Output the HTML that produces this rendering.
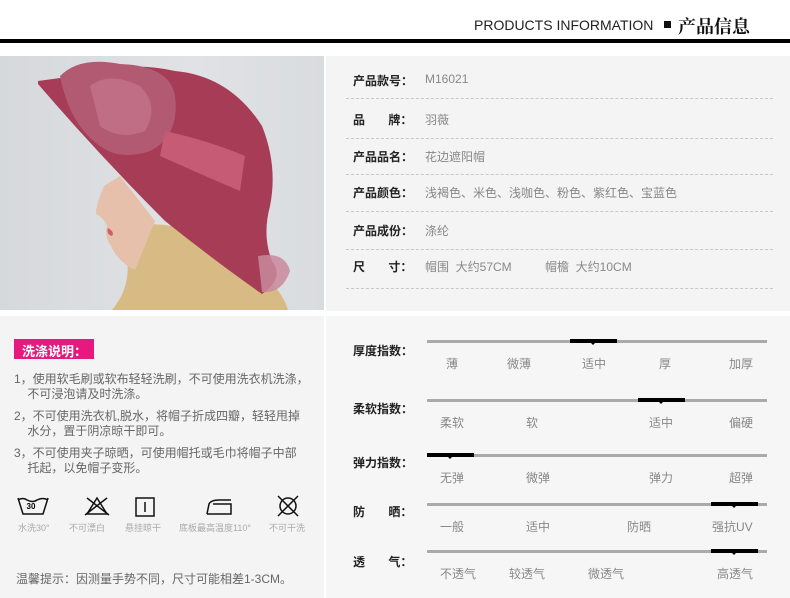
<!DOCTYPE html>
<html><head><meta charset="utf-8"><style>
*{margin:0;padding:0;box-sizing:border-box}
body{width:790px;height:598px;background:#fff;position:relative;overflow:hidden;font-family:"Liberation Sans","Noto Sans CJK SC",sans-serif}
.a{position:absolute}
.lbl{font-size:12px;color:#222;font-weight:bold}
.val{font-size:12px;color:#888}
.dash{position:absolute;left:346px;width:427px;border-top:1px dashed #c8c8c8}
.bar{position:absolute;left:427px;width:340px;height:3px;background:#aaa}
.blk{position:absolute;height:4px;background:#000;top:-1px;width:47px}
.blk:after{content:"";position:absolute;left:20px;top:3px;border:3px solid transparent;border-top:3px solid #000}
.t{position:absolute;font-size:12px;color:#888;white-space:nowrap}
.ic{position:absolute;top:492px;font-size:9px;color:#aaa;white-space:nowrap}
</style></head><body>
<div class="a" style="left:474px;top:17px;font-size:14px;color:#222">PRODUCTS INFORMATION</div>
<div class="a" style="left:664px;top:21px;width:7px;height:7px;background:#111"></div>
<div class="a" style="left:678px;top:13px;font-size:18px;color:#111;font-family:'Noto Serif CJK SC',serif;font-weight:bold">产品信息</div>
<div class="a" style="left:0;top:39px;width:790px;height:4px;background:#000"></div>

<div class="a" style="left:0;top:56px;width:324px;height:254px;background:linear-gradient(90deg,#d6d9dc,#e0e2e4 60%,#d9dcdf);overflow:hidden">
<svg width="324" height="254" viewBox="0 0 324 254">
<path d="M118 175 Q170 155 230 195 Q280 225 288 254 L112 254 Q140 220 118 175 Z" fill="#d8bb84"/>
<path d="M104 130 Q96 148 96 158 Q104 162 107 170 Q104 180 111 190 Q118 206 135 214 L155 165 L120 120 Z" fill="#e6c0aa"/>
<path d="M108 172 Q115 176 112 180 Q106 178 108 172 Z" fill="#c9606a"/>
<path d="M38 25 L90 18 Q130 5 175 15 Q230 20 262 70 Q278 110 270 150 Q262 180 272 205 Q285 222 262 238 Q215 205 165 165 Q100 100 38 28 Z" fill="#a63c56"/>
<path d="M60 20 Q80 0 120 8 Q170 10 175 40 Q180 80 150 95 Q120 105 100 90 Q70 70 60 20 Z" fill="#b35a73"/>
<path d="M90 30 Q110 15 140 30 Q160 50 145 75 Q120 85 100 70 Z" fill="#c27389" opacity=".8"/>
<path d="M165 75 Q210 85 245 100 L240 135 Q200 118 160 100 Z" fill="#c55b75"/>
<path d="M258 200 Q285 195 290 215 Q282 238 262 236 Z" fill="#c98a9c" opacity=".85"/>
</svg></div>

<div class="a" style="left:326px;top:56px;width:464px;height:255px;background:#f4f4f4"></div>
<div class="a lbl" style="left:353px;top:72px">产品款号：</div><div class="a val" style="left:425px;top:72px">M16021</div>
<div class="dash" style="top:98px"></div>
<div class="a lbl" style="left:353px;top:111px">品&nbsp;&nbsp;&nbsp;&nbsp;&nbsp;&nbsp;&nbsp;牌：</div><div class="a val" style="left:425px;top:111px">羽薇</div>
<div class="dash" style="top:138px"></div>
<div class="a lbl" style="left:353px;top:148px">产品品名：</div><div class="a val" style="left:425px;top:148px">花边遮阳帽</div>
<div class="dash" style="top:174px"></div>
<div class="a lbl" style="left:353px;top:184px">产品颜色：</div><div class="a val" style="left:425px;top:184px">浅褐色、米色、浅咖色、粉色、紫红色、宝蓝色</div>
<div class="dash" style="top:211px"></div>
<div class="a lbl" style="left:353px;top:222px">产品成份：</div><div class="a val" style="left:425px;top:222px">涤纶</div>
<div class="dash" style="top:249px"></div>
<div class="a lbl" style="left:353px;top:258px">尺&nbsp;&nbsp;&nbsp;&nbsp;&nbsp;&nbsp;&nbsp;寸：</div><div class="a val" style="left:425px;top:258px;word-spacing:0">帽围&nbsp;&nbsp;大约57CM&nbsp;&nbsp;&nbsp;&nbsp;&nbsp;&nbsp;&nbsp;&nbsp;&nbsp;&nbsp;帽檐&nbsp;&nbsp;大约10CM</div>
<div class="dash" style="top:288px"></div>

<div class="a" style="left:0;top:316px;width:324px;height:282px;background:#f4f4f4"></div>
<div class="a" style="left:326px;top:316px;width:464px;height:282px;background:#f6f6f6"></div>
<div class="a" style="left:14px;top:339px;width:80px;height:20px;background:#e5197e;color:#fff;font-size:13px;font-weight:bold;padding:2px 0 0 8px">洗涤说明：</div>
<div class="a" style="left:14px;top:372px;font-size:12px;color:#666;line-height:15px;width:300px">1，使用软毛刷或软布轻轻洗刷，不可使用洗衣机洗涤，<br>&nbsp;&nbsp;&nbsp;&nbsp;不可浸泡请及时洗涤。</div>
<div class="a" style="left:14px;top:409px;font-size:12px;color:#666;line-height:15px;width:300px">2，不可使用洗衣机,脱水，将帽子折成四瓣，轻轻甩掉<br>&nbsp;&nbsp;&nbsp;&nbsp;水分，置于阴凉晾干即可。</div>
<div class="a" style="left:14px;top:446px;font-size:12px;color:#666;line-height:15px;width:300px">3，不可使用夹子晾晒，可使用帽托或毛巾将帽子中部<br>&nbsp;&nbsp;&nbsp;&nbsp;托起，以免帽子变形。</div>
<svg class="a" style="left:15px;top:494px" width="300" height="30">
<g fill="none" stroke="#111" stroke-width="1.5">
<path d="M3 4 L8 20 L28 20 L33 4"/><path d="M3 6 Q8 3 12 6 Q18 9 22 6 Q28 3 33 6"/>
<path d="M72 20 L82 4 L92 20 Z"/><path d="M72 4 L94 21 M92 4 L70 21"/>
<rect x="121" y="4" width="18" height="18"/><path d="M130 8 V18"/>
<path d="M192 20 L194 10 Q196 6 204 6 L216 6 M192 20 H216 V10 H198"/>
<circle cx="273" cy="12" r="8"/><path d="M263 2 L283 22 M283 2 L263 22"/>
</g><text x="16" y="15" font-size="8" text-anchor="middle" font-family="Liberation Sans" font-weight="bold">30</text>
</svg>
<div class="ic" style="left:18px;top:521px">水洗30°</div>
<div class="ic" style="left:69px;top:521px">不可漂白</div>
<div class="ic" style="left:125px;top:521px">悬挂晾干</div>
<div class="ic" style="left:179px;top:521px">底板最高温度110°</div>
<div class="ic" style="left:269px;top:521px">不可干洗</div>
<div class="a" style="left:16px;top:570px;font-size:12px;color:#666">温馨提示：因测量手势不同，尺寸可能相差1-3CM。</div>

<div class="a lbl" style="left:353px;top:342px">厚度指数：</div>
<div class="bar" style="top:340px"><div class="blk" style="left:143px"></div></div>
<div class="t" style="left:446px;top:355px">薄</div><div class="t" style="left:507px;top:355px">微薄</div><div class="t" style="left:582px;top:355px">适中</div><div class="t" style="left:659px;top:355px">厚</div><div class="t" style="left:729px;top:355px">加厚</div>
<div class="a lbl" style="left:353px;top:400px">柔软指数：</div>
<div class="bar" style="top:399px"><div class="blk" style="left:211px"></div></div>
<div class="t" style="left:440px;top:414px">柔软</div><div class="t" style="left:526px;top:414px">软</div><div class="t" style="left:649px;top:414px">适中</div><div class="t" style="left:729px;top:414px">偏硬</div>
<div class="a lbl" style="left:353px;top:454px">弹力指数：</div>
<div class="bar" style="top:454px"><div class="blk" style="left:0"></div></div>
<div class="t" style="left:440px;top:469px">无弹</div><div class="t" style="left:526px;top:469px">微弹</div><div class="t" style="left:649px;top:469px">弹力</div><div class="t" style="left:729px;top:469px">超弹</div>
<div class="a lbl" style="left:353px;top:503px">防&nbsp;&nbsp;&nbsp;&nbsp;&nbsp;&nbsp;&nbsp;晒：</div>
<div class="bar" style="top:503px"><div class="blk" style="left:284px"></div></div>
<div class="t" style="left:440px;top:518px">一般</div><div class="t" style="left:526px;top:518px">适中</div><div class="t" style="left:627px;top:518px">防晒</div><div class="t" style="left:712px;top:518px">强抗UV</div>
<div class="a lbl" style="left:353px;top:553px">透&nbsp;&nbsp;&nbsp;&nbsp;&nbsp;&nbsp;&nbsp;气：</div>
<div class="bar" style="top:550px"><div class="blk" style="left:284px"></div></div>
<div class="t" style="left:440px;top:565px">不透气</div><div class="t" style="left:509px;top:565px">较透气</div><div class="t" style="left:588px;top:565px">微透气</div><div class="t" style="left:717px;top:565px">高透气</div>
</body></html>
